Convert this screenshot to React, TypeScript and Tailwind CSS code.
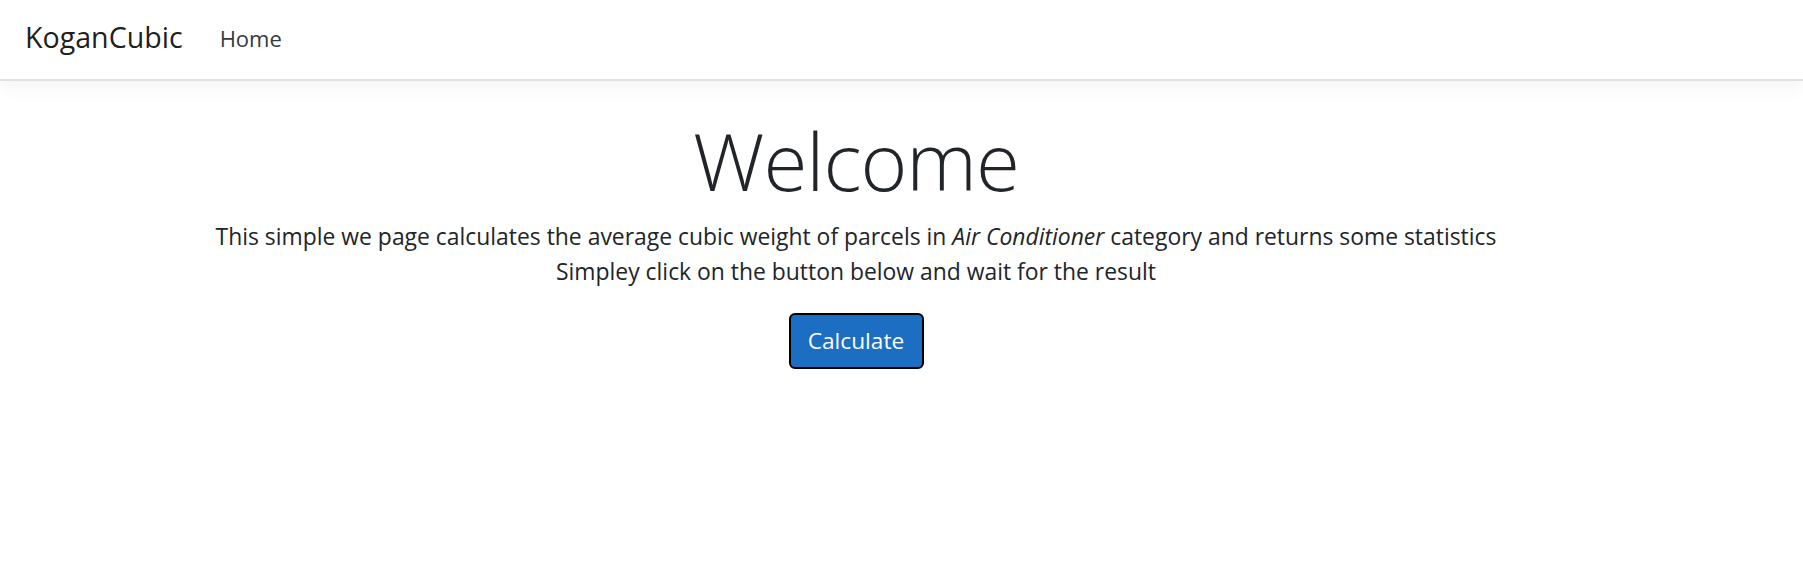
import React from "react";

export default function App() {
  return (
    <div className="min-h-[580px] bg-white text-[#212529]" style={{ fontFamily: "'Open Sans', 'Noto Sans', sans-serif" }}>
      <nav className="h-[81px] pb-[4px] border-b-2 border-[#dee2e6] shadow-[0_6px_18px_rgba(0,0,0,0.05)] flex items-center px-[25px]">
        <span className="text-[28.6px] text-black/90 leading-none">KoganCubic</span>
        <span className="ml-[37px] text-[22px] text-[#343a40] leading-none">Home</span>
      </nav>
      <main className="w-[1712px] text-center pt-[31px]">
        <h1 className="text-[80px] font-light leading-[1.2] tracking-[-1px]">Welcome</h1>
        <p className="text-[22.9px] leading-[35px] mt-[11px]">
          This simple we page calculates the average cubic weight of parcels in <em>Air Conditioner</em> category and returns some statistics
          <br />
          Simpley click on the button below and wait for the result
        </p>
        <button className="mt-[24px] w-[135px] h-[56px] bg-[#1b6ec2] text-white text-[22.7px] rounded-[6px] border-2 border-black">
          Calculate
        </button>
      </main>
    </div>
  );
}
